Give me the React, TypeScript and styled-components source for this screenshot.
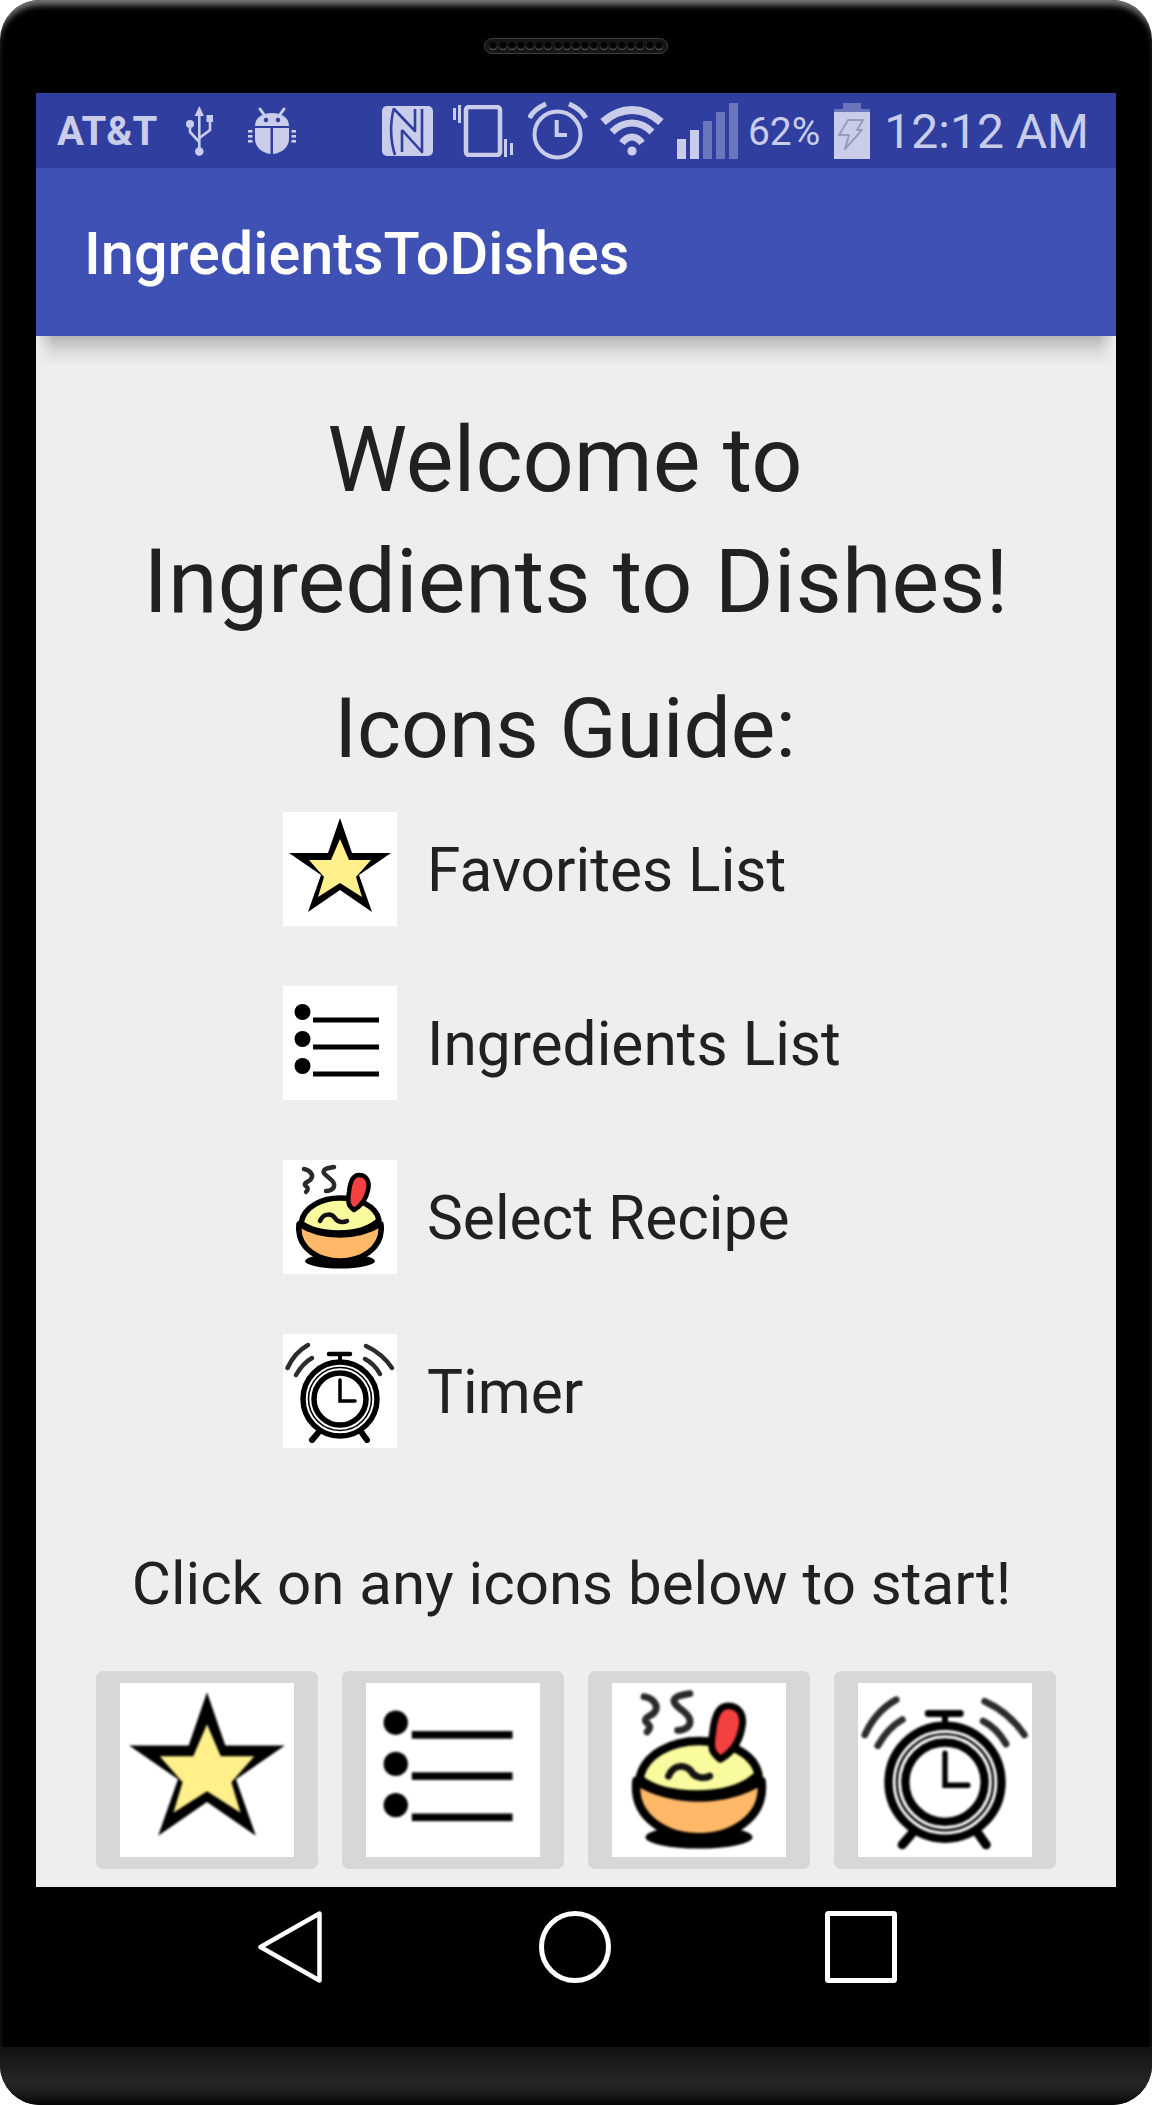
import React from "react";
import styled, { createGlobalStyle } from "styled-components";

const Global = createGlobalStyle`
  html, body { margin: 0; padding: 0; background: #fff; }
  body { font-family: Roboto, "Liberation Sans", sans-serif; }
`;

const ICON = "#c9cde9";
const DIM = "#6c76bd";
const BAR = "#303f9f";

const Device = styled.div`
  width: 1152px;
  height: 2105px;
  display: flex;
  flex-direction: column;
  background: #000;
  border-radius: 40px;
  overflow: hidden;
  position: relative;
  box-shadow: inset 0 8px 6px -3px #787878;
`;
const TopBezel = styled.div`
  height: 93px;
  flex: none;
  display: flex;
  justify-content: center;
  padding-top: 38px;
  box-sizing: border-box;
`;
const Speaker = styled.div`
  width: 184px;
  height: 16px;
  box-sizing: border-box;
  border-radius: 8px;
  background: #161616;
  border: 1px solid #3c3c3c;
  display: flex;
  align-items: center;
  justify-content: center;
  gap: 1.2px;
`;
const SpeakerHole = styled.span`
  width: 8px;
  height: 8px;
  border-radius: 50%;
  background: #050505;
  box-shadow: inset 0 -1px 1px #666;
`;
const Screen = styled.div`
  flex: none;
  height: 1794px;
  margin: 0 36px;
  display: flex;
  flex-direction: column;
  background: #eeeeee;
  overflow: hidden;
`;
const StatusBar = styled.div`
  flex: none;
  height: 75px;
  background: ${BAR};
  display: flex;
  align-items: center;
  justify-content: space-between;
  padding: 0 27px 0 21px;
  color: ${ICON};
`;
const StatusGroup = styled.div`
  display: flex;
  align-items: center;
`;
const Carrier = styled.span`
  font-size: 40px;
  font-weight: 700;
  line-height: 60px;
  padding-top: 2px;
  margin-right: 29px;
`;
const Percent = styled.span`
  font-size: 39px;
  line-height: 60px;
  padding-top: 2px;
  margin: 0 14px 0 10px;
`;
const Clock = styled.span`
  font-size: 48px;
  line-height: 60px;
  padding-top: 2px;
  margin-left: 14px;
`;
const Glyph = styled.svg<{ $ml?: number }>`
  display: block;
  flex: none;
  margin-left: ${(p) => p.$ml ?? 0}px;
`;
const AppBar = styled.header`
  flex: none;
  height: 168px;
  box-sizing: border-box;
  background: #3f51b5;
  display: flex;
  align-items: center;
  padding: 3px 0 0 48px;
  position: relative;
  &::after {
    content: "";
    position: absolute;
    top: 100%;
    left: 0;
    right: 0;
    height: 30px;
    background: linear-gradient(rgba(0, 0, 0, 0.24), rgba(0, 0, 0, 0.07) 55%, transparent);
    -webkit-mask-image: linear-gradient(90deg, transparent, #000 18px, #000 calc(100% - 18px), transparent);
    mask-image: linear-gradient(90deg, transparent, #000 18px, #000 calc(100% - 18px), transparent);
  }
`;
const AppTitle = styled.h1`
  margin: 0;
  font-size: 59.4px;
  font-weight: 500;
  color: #fff;
`;
const Content = styled.main`
  flex: 1;
  padding-top: 64px;
  display: flex;
  flex-direction: column;
`;
const Heading = styled.h2<{ $size: number; $shift?: number; $mt?: number }>`
  margin: ${(p) => p.$mt ?? 0}px 0 0;
  font-size: ${(p) => p.$size}px;
  font-weight: 400;
  line-height: 121px;
  color: #212121;
  text-align: center;
  padding-right: ${(p) => p.$shift ?? 0}px;
`;
const Legend = styled.ul`
  list-style: none;
  margin: 23px 0 0;
  padding: 0 0 0 247px;
  display: flex;
  flex-direction: column;
  gap: 60px;
`;
const LegendRow = styled.li`
  display: flex;
  align-items: center;
  gap: 30px;
  font-size: 60.4px;
  color: #212121;
`;
const LegendLabel = styled.span`
  padding-top: 3px;
`;
const Tile = styled.div<{ $size: number }>`
  width: ${(p) => p.$size}px;
  height: ${(p) => p.$size}px;
  background: #fff;
  overflow: hidden;
  flex: none;
`;
const TileArt = styled.svg<{ $blur: number }>`
  display: block;
  width: 100%;
  height: 100%;
  filter: blur(${(p) => p.$blur}px);
`;
const Prompt = styled.p`
  margin: 101px 0 0;
  font-size: 60.1px;
  line-height: 70px;
  color: #212121;
  text-align: center;
  padding-right: 9px;
`;
const Buttons = styled.div`
  margin-top: 52px;
  padding-left: 60px;
  display: flex;
  gap: 24px;
`;
const IconButton = styled.button`
  width: 222px;
  height: 198px;
  border: 0;
  padding: 0;
  border-radius: 7px;
  background: #d6d8d7;
  display: flex;
  align-items: center;
  justify-content: center;
`;
const NavBar = styled.nav`
  flex: none;
  height: 160px;
  display: flex;
  padding: 24px 0 0 258px;
  box-sizing: border-box;
`;
const Chin = styled.div`
  flex: none;
  height: 58px;
  background: linear-gradient(#121212 0%, #262626 62%, #1a1a1a 82%, #050505 100%);
`;

const Star = () => (
  <>
    <polygon points="57,6 69,41 108,41 76,63 89,100 57,78 25,100 38,63 6,41 45,41" fill="#000" />
    <polygon points="57,27 66,48 88,48 73,65 79,85 57,71 35,85 41,65 26,48 48,48" fill="#fff08c" />
  </>
);
const ListArt = () => (
  <g fill="#000">
    <circle cx="19.5" cy="26" r="8" />
    <circle cx="19.5" cy="53" r="8" />
    <circle cx="19.5" cy="80" r="8" />
    <rect x="30" y="31.5" width="66" height="5" />
    <rect x="30" y="58.5" width="66" height="5" />
    <rect x="30" y="85.5" width="66" height="5" />
  </g>
);
const Bowl = () => (
  <>
    <g fill="none" stroke="#2a2a2a" strokeWidth="4.5" strokeLinecap="round" strokeLinejoin="round">
      <path d="M21,9 C27,10 31,15 28,19 C26,22 21,22 22,25 C23,27 27,28 23,32" />
      <path d="M51,7 C45,8 39,9 41,13 C43,17 50,19 51,24 C52,29 47,31 43,31" />
    </g>
    <ellipse cx="57" cy="101" rx="35" ry="7.5" fill="#000" />
    <path d="M16,64 C13,90 38,101 57,101 C76,101 101,90 98,64 C85,72 70,75 57,75 C44,75 28,72 16,64 Z" fill="#ffb868" stroke="#000" strokeWidth="5.5" strokeLinejoin="round" />
    <path d="M18,63 C21,46 40,38 57,38 C74,38 93,45 96,60 C86,70 70,73 55,73 C40,73 27,70 18,63 Z" fill="#fafa9e" stroke="#000" strokeWidth="5.5" strokeLinejoin="round" />
    <path d="M37,61 C41,52 49,54 52,58 C54,62 60,63 64,61" fill="none" stroke="#111" strokeWidth="4.5" strokeLinecap="round" />
    <path d="M71,50 C66,46 64,44 66,32 C67,22 70,15 76,15 C84,15 87,22 85,30 C83,40 78,46 71,50 Z" fill="#f44040" stroke="#000" strokeWidth="4.5" strokeLinejoin="round" />
  </>
);
const AlarmArt = () => (
  <>
    <g fill="none" stroke="#2c2c2c" strokeWidth="4.5" strokeLinecap="round">
      <path d="M4.5,34 C9,24 16,16 25,11" />
      <path d="M13,41 C17,34 22,28 29,24" />
      <path d="M83,12 C94,17 103,25 109,34" />
      <path d="M82,25 C88,28 93,33 97,40" />
    </g>
    <g fill="none" stroke="#000" strokeLinecap="round">
      <path d="M46,20 H67" strokeWidth="4.5" />
      <path d="M57,20 V28" strokeWidth="4" />
      <circle cx="57" cy="65" r="37" strokeWidth="5.5" />
      <circle cx="57" cy="65" r="31.5" strokeWidth="1.6" />
      <circle cx="57" cy="65" r="26" strokeWidth="5.5" />
      <path d="M57,46 V67 H72" strokeWidth="3.5" />
      <path d="M29,106 L35,99" strokeWidth="6" />
      <path d="M84,106 L79,99" strokeWidth="6" />
    </g>
  </>
);

const legend = [
  { label: "Favorites List", Art: Star },
  { label: "Ingredients List", Art: ListArt },
  { label: "Select Recipe", Art: Bowl },
  { label: "Timer", Art: AlarmArt },
];

export default function App() {
  return (
    <>
      <Global />
      <Device>
        <TopBezel>
          <Speaker>
            {Array.from({ length: 19 }, (_, i) => (
              <SpeakerHole key={i} />
            ))}
          </Speaker>
        </TopBezel>
        <Screen>
          <StatusBar>
            <StatusGroup>
              <Carrier>AT&amp;T</Carrier>
              <Glyph width="27" height="50" viewBox="0 0 27 50">
                <g fill="none" stroke={ICON} strokeWidth="2.6">
                  <path d="M13.3,8 V44" />
                  <path d="M4,20 V26 L13.3,36" />
                  <path d="M24,14 V24 L13.3,32" />
                </g>
                <g fill={ICON}>
                  <path d="M13.3,0 L18,10 H8.6 Z" />
                  <circle cx="13.3" cy="45.5" r="4.3" />
                  <circle cx="4" cy="18" r="4" />
                  <rect x="20.5" y="9" width="6.5" height="7" />
                </g>
              </Glyph>
              <Glyph $ml={35} width="48" height="47" viewBox="0 0 48 47">
                <g fill={ICON}>
                  <path d="M7,19 C7,11 14,6 24,6 C34,6 41,11 41,19 Z" />
                  <path d="M22.5,21 H7 V32 C7,40 14,46 22.5,47 Z" />
                  <path d="M25,21 H41 V32 C41,40 34,46 25,47 Z" />
                  <rect x="0" y="23" width="4.5" height="2.6" />
                  <rect x="0" y="28" width="4.5" height="2.6" />
                  <rect x="0" y="33" width="4.5" height="2.6" />
                  <rect x="43.5" y="23" width="4.5" height="2.6" />
                  <rect x="43.5" y="28" width="4.5" height="2.6" />
                  <rect x="43.5" y="33" width="4.5" height="2.6" />
                </g>
                <g stroke={ICON} strokeWidth="3" strokeLinecap="round">
                  <path d="M12,2 L17,9" />
                  <path d="M36,2 L31,9" />
                </g>
                <circle cx="18" cy="13" r="2.2" fill={BAR} />
                <circle cx="30" cy="13" r="2.2" fill={BAR} />
              </Glyph>
            </StatusGroup>
            <StatusGroup>
              <Glyph width="51" height="50" viewBox="0 0 51 50">
                <rect width="51" height="50" rx="5" fill={ICON} />
                <g fill="none" stroke={BAR} strokeWidth="2.6" strokeLinejoin="round">
                  <path d="M12,2 C8,16 8,34 13,49" />
                  <path d="M12,3 L33,25 V3" />
                  <path d="M20,24 L40,46 V3" />
                  <path d="M20,24 V46" />
                </g>
              </Glyph>
              <Glyph $ml={20} width="60" height="52" viewBox="0 0 60 52">
                <g fill={ICON}>
                  <rect x="0" y="3" width="3" height="12" />
                  <rect x="5" y="0" width="3" height="18" />
                  <rect x="51" y="34" width="3" height="18" />
                  <rect x="57" y="38" width="3" height="12" />
                </g>
                <rect x="13" y="2" width="34" height="48" rx="3" fill="none" stroke={ICON} strokeWidth="4.5" />
              </Glyph>
              <Glyph $ml={15} width="60" height="58" viewBox="0 0 60 58">
                <g fill="none" stroke={ICON}>
                  <circle cx="29.5" cy="32.5" r="23" strokeWidth="4" />
                  <path d="M28.7,18 V33 H39" strokeWidth="4" />
                  <path d="M1.5,16 C5,9 11,5 18,2" strokeWidth="5" />
                  <path d="M41,2 C48,5 54,9 58,16" strokeWidth="5" />
                </g>
              </Glyph>
              <Glyph $ml={11} width="66" height="50" viewBox="0 0 66 50">
                <g fill="none" stroke={ICON}>
                  <path d="M4,16 C22,0 44,0 62,16" strokeWidth="8" />
                  <path d="M13,26 C25,14 41,14 53,26" strokeWidth="7" />
                  <path d="M23,37 C29,29 37,29 43,37" strokeWidth="7" />
                </g>
                <circle cx="33" cy="45" r="4.6" fill={ICON} />
              </Glyph>
              <Glyph $ml={12} width="61" height="56" viewBox="0 0 61 56">
                <rect x="0" y="36" width="9" height="20" fill={ICON} />
                <rect x="13" y="27" width="9" height="29" fill={ICON} />
                <rect x="26" y="18" width="9" height="38" fill={DIM} />
                <rect x="39" y="9" width="9" height="47" fill={DIM} />
                <rect x="52" y="0" width="9" height="56" fill={DIM} />
              </Glyph>
              <Percent>62%</Percent>
              <Glyph width="36" height="56" viewBox="0 0 36 56">
                <rect x="9" y="0" width="18" height="7" fill={DIM} />
                <rect x="0" y="6" width="36" height="3" fill={DIM} />
                <rect x="0" y="9" width="36" height="47" fill={ICON} />
                <path d="M14,17 H29 L23,27 H28 L11,46 L15,32 H5 Z" fill="none" stroke="#9a9db8" strokeWidth="2" strokeLinejoin="round" />
              </Glyph>
              <Clock>12:12 AM</Clock>
            </StatusGroup>
          </StatusBar>
          <AppBar>
            <AppTitle>IngredientsToDishes</AppTitle>
          </AppBar>
          <Content>
            <Heading $size={90} $shift={22}>Welcome to</Heading>
            <Heading $size={89.8}>Ingredients to Dishes!</Heading>
            <Heading $size={84} $shift={22} $mt={26}>
              Icons Guide:
            </Heading>
            <Legend>
              {legend.map(({ label, Art }) => (
                <LegendRow key={label}>
                  <Tile $size={114}>
                    <TileArt $blur={0.7} viewBox="0 0 114 114">
                      <Art />
                    </TileArt>
                  </Tile>
                  <LegendLabel>{label}</LegendLabel>
                </LegendRow>
              ))}
            </Legend>
            <Prompt>Click on any icons below to start!</Prompt>
            <Buttons>
              {legend.map(({ label, Art }) => (
                <IconButton key={label} aria-label={label}>
                  <Tile $size={174}>
                    <TileArt $blur={1.2} viewBox="0 0 114 114">
                      <Art />
                    </TileArt>
                  </Tile>
                </IconButton>
              ))}
            </Buttons>
          </Content>
        </Screen>
        <NavBar>
          <Glyph width="64" height="72" viewBox="0 0 64 72">
            <path d="M61.5,2.5 V69.5 L2.5,36 Z" fill="none" stroke="#fff" strokeWidth="4.5" strokeLinejoin="round" />
          </Glyph>
          <Glyph $ml={217} width="72" height="72" viewBox="0 0 72 72">
            <circle cx="36" cy="36" r="33.5" fill="none" stroke="#fff" strokeWidth="5" />
          </Glyph>
          <Glyph $ml={214} width="72" height="72" viewBox="0 0 72 72">
            <rect x="2.5" y="2.5" width="67" height="67" rx="1" fill="none" stroke="#fff" strokeWidth="5" />
          </Glyph>
        </NavBar>
        <Chin />
      </Device>
    </>
  );
}
